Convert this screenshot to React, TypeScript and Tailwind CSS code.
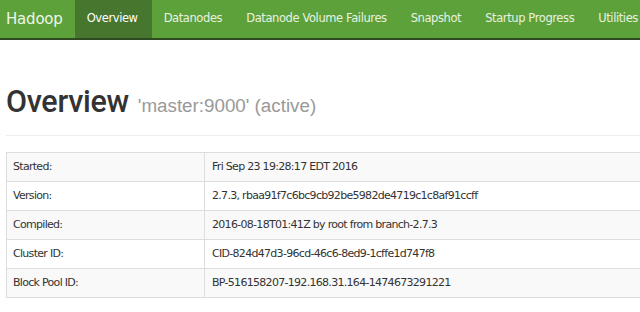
import React from 'react';

// --- DATA ---
const NAV_ITEMS = ['Overview', 'Datanodes', 'Datanode Volume Failures', 'Snapshot', 'Startup Progress', 'Utilities'];

const ROWS: [string, string][] = [
  ['Started:', 'Fri Sep 23 19:28:17 EDT 2016'],
  ['Version:', '2.7.3, rbaa91f7c6bc9cb92be5982de4719c1c8af91ccff'],
  ['Compiled:', '2016-08-18T01:41Z by root from branch-2.7.3'],
  ['Cluster ID:', 'CID-824d47d3-96cd-46c6-8ed9-1cffe1d747f8'],
  ['Block Pool ID:', 'BP-516158207-192.168.31.164-1474673291221'],
];

export default function App() {
  return (
    <div className="w-[640px] h-[312px] overflow-hidden bg-white" style={{ fontFamily: '"DejaVu Sans", sans-serif' }}>
      {/* --- NAVBAR --- */}
      <nav className="h-[40px] bg-[#5da13b] border-b-2 border-[#2f4a22] flex items-stretch whitespace-nowrap">
        <div className="pl-[6px] pr-[12px] flex items-center text-[15px] text-[#eef6e8] tracking-[-0.2px]">Hadoop</div>
        {NAV_ITEMS.map((item, i) => (
          <div
            key={item}
            className={`px-[12px] flex items-center text-[11.5px] tracking-[-0.4px] ${i === 0 ? 'pr-[14px] bg-[#47762f] text-white' : 'text-[#e8f2e0]'}`}
          >
            {item}
          </div>
        ))}
      </nav>

      {/* --- HEADER --- */}
      <div className="pl-[6px]">
        <div className="mt-[44px] flex items-baseline gap-[9px] whitespace-nowrap">
          <h1 className="text-[30.5px] leading-[35px] font-medium tracking-[-0.3px] text-[#333]" style={{ fontFamily: 'Roboto, "Liberation Sans", sans-serif' }}>Overview</h1>
          <span className="text-[18.8px] text-[#999]" style={{ fontFamily: '"Liberation Sans", Arial, sans-serif' }}>'master:9000' (active)</span>
        </div>
        <div className="mt-[15px] h-px bg-[#eeeeee]" />

        {/* --- INFO TABLE --- */}
        <table className="mt-[16px] w-[700px] border-collapse border border-[#dddddd] text-[11px] text-[#333] tracking-[-0.7px]">
          <tbody>
            {ROWS.map(([k, v], i) => (
              <tr key={k} className={i % 2 === 0 ? 'bg-[#f9f9f9]' : 'bg-white'}>
                <td className="w-[198px] h-[29px] border border-[#dddddd] pl-[6px] py-0 align-middle">{k}</td>
                <td className="h-[29px] border border-[#dddddd] pl-[7px] py-0 align-middle whitespace-nowrap">{v}</td>
              </tr>
            ))}
          </tbody>
        </table>
      </div>
    </div>
  );
}
